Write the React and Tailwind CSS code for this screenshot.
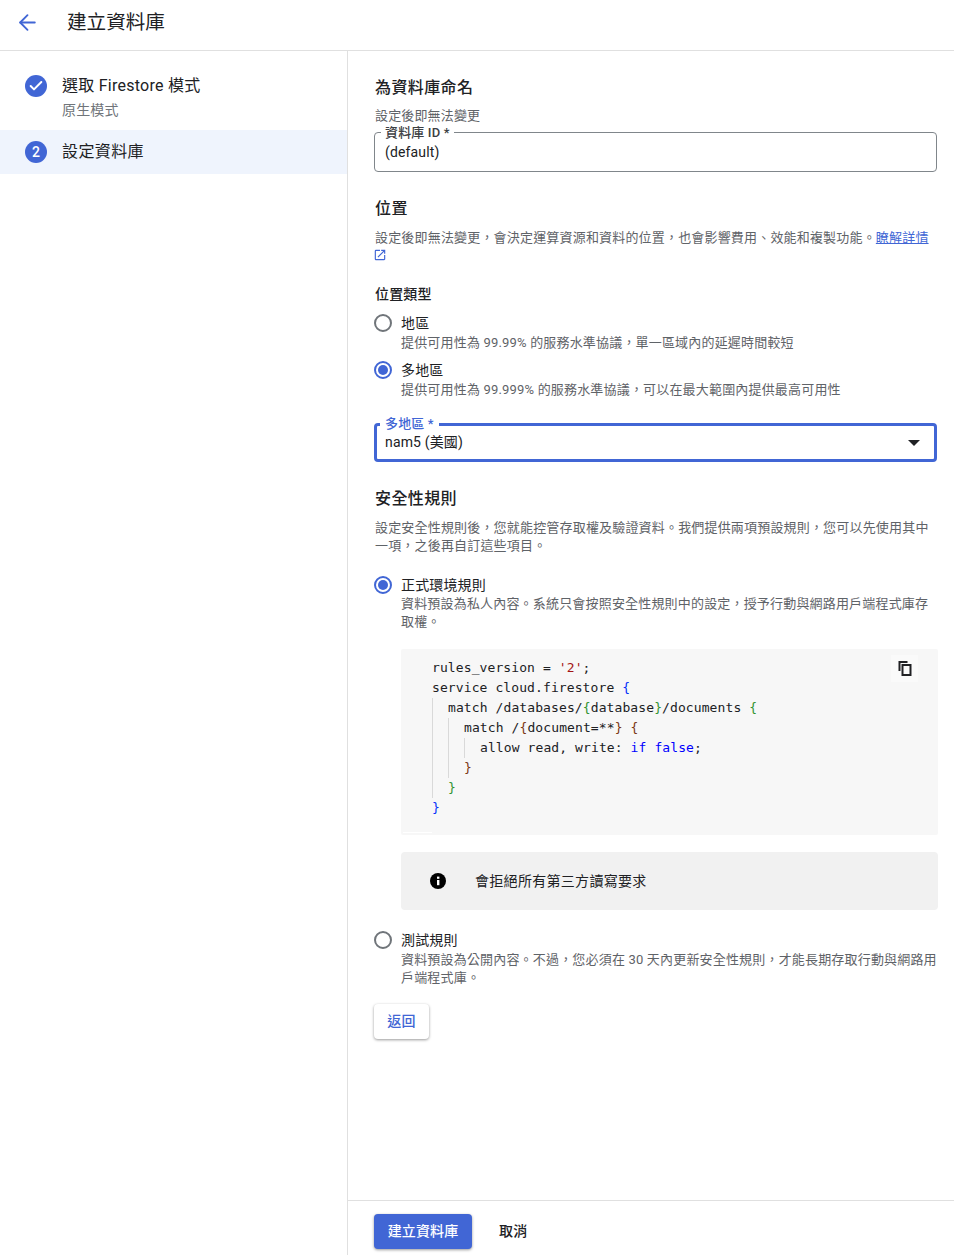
import { ArrowLeft, Check } from 'lucide-react';
import { MdOpenInNew } from 'react-icons/md';

const FONT = "font-['Roboto','Noto_Sans_CJK_TC',sans-serif]";
const MONO = "font-['DejaVu_Sans_Mono','Noto_Sans_CJK_TC',monospace]";

function Radio({ checked }) {
  return (
    <span
      className={`flex h-[18px] w-[18px] shrink-0 items-center justify-center rounded-full border-2 ${
        checked ? 'border-[#4166d5]' : 'border-[#70757a]'
      }`}
    >
      {checked && <span className="h-[10px] w-[10px] rounded-full bg-[#4166d5]" />}
    </span>
  );
}

function RadioRow({ checked, title, children, className = '', subClass = '' }) {
  return (
    <div className={`flex gap-[9px] ${className}`}>
      <div className="pt-[1px]">
        <Radio checked={checked} />
      </div>
      <div>
        <div className="text-[14px] leading-[20px] text-[#202124]">{title}</div>
        <div className={`text-[13px] leading-[18px] tracking-[.18px] text-[#5f6368] ${subClass}`}>{children}</div>
      </div>
    </div>
  );
}

function SectionTitle({ children, className = '' }) {
  return <h2 className={`pl-[1px] text-[16px] font-medium leading-[24px] tracking-[.4px] text-[#202124] ${className}`}>{children}</h2>;
}

function Pn({ c, children }) {
  return <span className={c}>{children}</span>;
}

function CodeBlock() {
  return (
    <div className={`relative mt-[18px] ml-[27px] h-[186px] rounded-[2px] bg-[#f7f7f7] pt-[9px] pl-[31px] text-[13px] leading-[20px] tracking-[.1px] text-[#202124] ${MONO}`}>
      <div className="whitespace-pre">
        rules_version = <Pn c="text-[#a31515]">'2'</Pn>;
      </div>
      <div className="whitespace-pre">
        service cloud.firestore <Pn c="text-[#0431fa]">{'{'}</Pn>
      </div>
      <div className="border-l border-[#d9d9d9] pl-[15px]">
        <div className="whitespace-pre">
          match /databases/<Pn c="text-[#319331]">{'{'}</Pn>database<Pn c="text-[#319331]">{'}'}</Pn>/documents <Pn c="text-[#319331]">{'{'}</Pn>
        </div>
        <div className="border-l border-[#d9d9d9] pl-[15px]">
          <div className="whitespace-pre">
            match /<Pn c="text-[#7b3814]">{'{'}</Pn>document=**<Pn c="text-[#7b3814]">{'}'}</Pn> <Pn c="text-[#7b3814]">{'{'}</Pn>
          </div>
          <div className="border-l border-[#d9d9d9] pl-[15px] whitespace-pre">
            allow read, write: <Pn c="text-[#0000ff]">if</Pn> <Pn c="text-[#0000ff]">false</Pn>;
          </div>
          <div className="text-[#7b3814]">{'}'}</div>
        </div>
        <div className="text-[#319331]">{'}'}</div>
      </div>
      <div className="text-[#0431fa]">{'}'}</div>
      <div className="absolute bottom-[2px] left-[2px] h-px w-[29px] bg-white" />
      <button className="absolute top-[6px] right-[20px] flex h-[27px] w-[27px] items-center justify-center bg-[#fafafa] pb-[2px]">
        <svg width="16" height="16" viewBox="0 0 16 16" fill="none">
          <path d="M2.5 11V2h8" stroke="#202124" strokeWidth="2" />
          <rect x="5.5" y="5" width="8" height="10" stroke="#202124" strokeWidth="2" fill="#fafafa" />
        </svg>
      </button>
    </div>
  );
}

export default function App() {
  return (
    <div className={`flex h-[1255px] w-[954px] flex-col overflow-hidden bg-white tracking-[.15px] ${FONT}`}>
      {/* Top bar */}
      <header className="flex h-[51px] shrink-0 items-center border-b border-[#e0e0e0] pb-[5px]">
        <ArrowLeft className="ml-[15px] text-[#4166d5]" size={25} strokeWidth={1.8} />
        <h1 className="ml-[27px] text-[19.6px] leading-[28px] tracking-normal text-[#202124]">建立資料庫</h1>
      </header>

      <div className="flex min-h-0 flex-1">
        {/* Stepper */}
        <aside className="w-[348px] shrink-0 border-r border-[#e0e0e0] pt-[23px]">
          <div className="flex h-[56px] gap-[15px] pl-[25px]">
            <span className="mt-[1px] flex h-[22px] w-[22px] items-center justify-center rounded-full bg-[#4166d5]">
              <Check className="text-white" size={16} strokeWidth={3} />
            </span>
            <div>
              <div className="text-[16px] leading-[24px] tracking-[.25px] text-[#202124]">選取 Firestore 模式</div>
              <div className="mt-[2px] text-[14px] leading-[20px] text-[#70757a]">原生模式</div>
            </div>
          </div>
          <div className="flex h-[44px] items-center gap-[15px] bg-[#eff4fd] pl-[25px]">
            <span className="flex h-[22px] w-[22px] items-center justify-center rounded-full bg-[#4166d5] text-[14px] font-medium text-white">
              2
            </span>
            <span className="text-[16px] tracking-[.4px] text-[#202124]">設定資料庫</span>
          </div>
        </aside>

        {/* Form column */}
        <div className="flex min-w-0 flex-1 flex-col">
          <main className="flex-1 pt-[25px] pr-[16px] pl-[26px]">
            <SectionTitle>為資料庫命名</SectionTitle>
            <p className="mt-[7px] pl-[1px] text-[13px] leading-[18px] text-[#5f6368]">設定後即無法變更</p>

            <div className="relative mt-[7px] mr-[1px] h-[40px] rounded-[4px] border border-[#80868b] pt-[9px] pl-[10px] text-[14px] leading-[20px] text-[#202124]">
              <span className="absolute -top-[7px] left-[6px] bg-white px-[4px] text-[13px] leading-[14px] font-medium text-[#3c4043]">
                資料庫 ID *
              </span>
              (default)
            </div>

            <SectionTitle className="mt-[25px]">位置</SectionTitle>
            <p className="mt-[8px] pl-[1px] text-[13px] leading-[18px] tracking-[.18px] text-[#5f6368]">
              設定後即無法變更，會決定運算資源和資料的位置，也會影響費用、效能和複製功能。
              <a className="text-[#4166d5] underline">瞭解詳情</a>{' '}
              <MdOpenInNew className="-ml-[2px] inline-block align-[-2px] text-[#4166d5]" size={14} />
            </p>

            <h3 className="mt-[19px] pl-[1px] text-[14px] leading-[20px] font-medium text-[#202124]">位置類型</h3>

            <RadioRow className="mt-[9px]" subClass="mt-[1px]" title="地區">
              提供可用性為 99.99% 的服務水準協議，單一區域內的延遲時間較短
            </RadioRow>
            <RadioRow className="mt-[8px]" subClass="mt-[1px]" checked title="多地區">
              提供可用性為 99.999% 的服務水準協議，可以在最大範圍內提供最高可用性
            </RadioRow>

            <div className="relative mt-[24px] mr-[1px] flex h-[39px] items-center justify-between rounded-[4px] border-[3px] border-[#4166d5] pr-[14px] pl-[8px] text-[14px] text-[#202124]">
              <span className="absolute -top-[9px] left-[3px] bg-white px-[5px] text-[13px] leading-[14px] font-medium text-[#4166d5]">
                多地區 *
              </span>
              <span>nam5 (美國)</span>
              <span className="h-0 w-0 border-x-[6px] border-t-[6px] border-x-transparent border-t-[#202124]" />
            </div>

            <SectionTitle className="mt-[25px]">安全性規則</SectionTitle>
            <p className="mt-[8px] pl-[1px] text-[13px] leading-[18px] tracking-[.18px] text-[#5f6368]">
              設定安全性規則後，您就能控管存取權及驗證資料。我們提供兩項預設規則，您可以先使用其中一項，之後再自訂這些項目。
            </p>

            <RadioRow className="mt-[20px]" checked title="正式環境規則">
              資料預設為私人內容。系統只會按照安全性規則中的設定，授予行動與網路用戶端程式庫存取權。
            </RadioRow>

            <CodeBlock />

            <div className="mt-[17px] ml-[27px] flex h-[58px] items-center rounded-[4px] bg-[#f1f1f1] pl-[29px]">
              <svg width="16" height="16" viewBox="0 0 16 16">
                <circle cx="8" cy="8" r="8" fill="#000" />
                <rect x="7" y="7" width="2.4" height="5.2" fill="#fff" />
                <rect x="7" y="3.6" width="2.4" height="2.2" fill="#fff" />
              </svg>
              <span className="ml-[29px] text-[14px] tracking-[.3px] text-[#202124]">會拒絕所有第三方讀寫要求</span>
            </div>

            <RadioRow className="mt-[20px]" subClass="mt-[1px]" title="測試規則">
              資料預設為公開內容。不過，您必須在 30 天內更新安全性規則，才能長期存取行動與網路用戶端程式庫。
            </RadioRow>

            <button className="mt-[17px] h-[35px] w-[55px] rounded-[4px] bg-white text-[14px] font-medium text-[#4166d5] shadow-[0_1px_3px_rgba(0,0,0,0.4)]">
              返回
            </button>
          </main>

          {/* Footer actions */}
          <footer className="flex h-[55px] shrink-0 items-start gap-[27px] border-t border-[#e0e0e0] pt-[13px] pl-[26px]">
            <button className="h-[35px] w-[98px] rounded-[4px] bg-[#4166d5] text-[14px] font-medium text-white shadow-[0_1px_3px_rgba(0,0,0,0.4)]">
              建立資料庫
            </button>
            <button className="h-[35px] text-[14px] font-medium text-[#202124]">取消</button>
          </footer>
        </div>
      </div>
    </div>
  );
}
